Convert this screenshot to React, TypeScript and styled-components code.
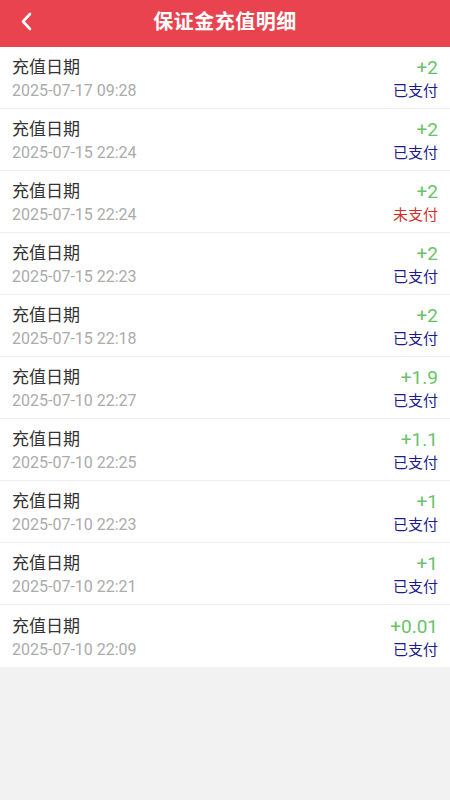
import styled, { createGlobalStyle } from "styled-components";

const GlobalStyle = createGlobalStyle`
  html, body {
    margin: 0;
    padding: 0;
    background: #f2f2f2;
    font-family: Roboto, "Noto Sans CJK SC", sans-serif;
  }
`;

const Page = styled.div`
  width: 450px;
  min-height: 800px;
  background: #f2f2f2;
`;

const Header = styled.header`
  position: relative;
  height: 47px;
  display: flex;
  align-items: center;
  justify-content: center;
  background: #e8434f;
`;

const BackButton = styled.button`
  position: absolute;
  left: 12px;
  top: 7px;
  width: 30px;
  height: 30px;
  padding: 0;
  border: 0;
  background: none;
  display: flex;
  align-items: center;
  justify-content: center;
`;

const Title = styled.h1`
  margin: 0 0 6px;
  color: #fff;
  font-size: 20px;
  font-weight: 700;
  letter-spacing: 0.5px;
`;

const List = styled.ul`
  margin: 0;
  padding: 0;
  list-style: none;
  background: #fff;
`;

const Row = styled.li`
  height: 61px;
  padding: 0 12px;
  display: flex;
  align-items: center;
  justify-content: space-between;
  border-bottom: 1px solid #eeeeee;

  &:last-child {
    border-bottom: 0;
    height: 62px;
  }
`;

const Col = styled.div<{ $right?: boolean }>`
  display: flex;
  flex-direction: column;
  align-items: ${({ $right }) => ($right ? "flex-end" : "flex-start")};
  gap: 1px;
  padding-top: 3px;
`;

const Label = styled.span`
  color: #333;
  font-size: 17px;
  line-height: 23px;
`;

const DateText = styled.span`
  color: #ababab;
  font-size: 16px;
  line-height: 22px;
`;

const Amount = styled.span`
  color: #6ac26a;
  font-size: 19px;
  line-height: 23px;
`;

const Status = styled.span<{ $paid: boolean }>`
  color: ${({ $paid }) => ($paid ? "#1c1c8f" : "#d2302a")};
  font-size: 15px;
  line-height: 22px;
`;

const records = [
  { date: "2025-07-17 09:28", amount: "+2", paid: true },
  { date: "2025-07-15 22:24", amount: "+2", paid: true },
  { date: "2025-07-15 22:24", amount: "+2", paid: false },
  { date: "2025-07-15 22:23", amount: "+2", paid: true },
  { date: "2025-07-15 22:18", amount: "+2", paid: true },
  { date: "2025-07-10 22:27", amount: "+1.9", paid: true },
  { date: "2025-07-10 22:25", amount: "+1.1", paid: true },
  { date: "2025-07-10 22:23", amount: "+1", paid: true },
  { date: "2025-07-10 22:21", amount: "+1", paid: true },
  { date: "2025-07-10 22:09", amount: "+0.01", paid: true },
];

export default function App() {
  return (
    <Page>
      <GlobalStyle />
      <Header>
        <BackButton aria-label="返回">
          <svg width="20" height="20" viewBox="0 0 20 20">
            <path
              d="M13 2 L6 9.5 L13 17"
              fill="none"
              stroke="#fff"
              strokeWidth="2.6"
              strokeLinecap="round"
              strokeLinejoin="round"
            />
          </svg>
        </BackButton>
        <Title>保证金充值明细</Title>
      </Header>
      <List>
        {records.map((r, i) => (
          <Row key={i}>
            <Col>
              <Label>充值日期</Label>
              <DateText>{r.date}</DateText>
            </Col>
            <Col $right>
              <Amount>{r.amount}</Amount>
              <Status $paid={r.paid}>{r.paid ? "已支付" : "未支付"}</Status>
            </Col>
          </Row>
        ))}
      </List>
    </Page>
  );
}
